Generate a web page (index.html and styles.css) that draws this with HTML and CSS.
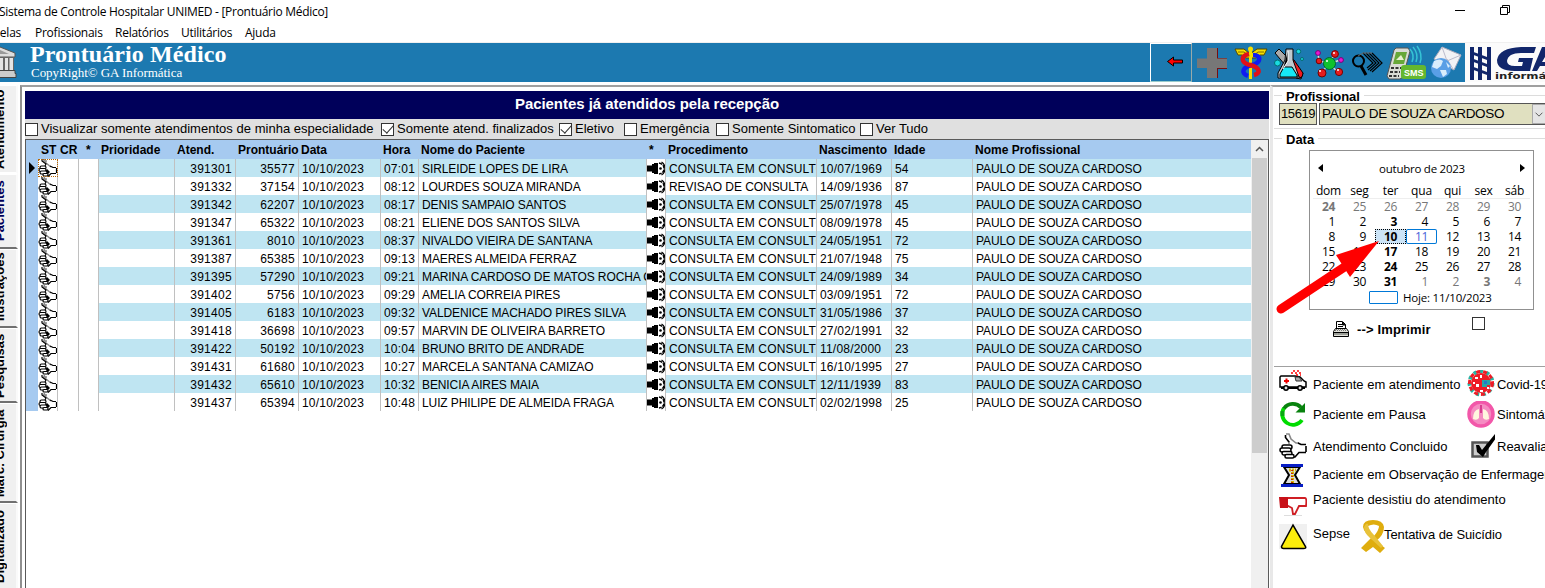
FILE: index.html
```html
<!DOCTYPE html>
<html lang="pt-BR">
<head>
<meta charset="utf-8">
<title>Prontuário Médico</title>
<link rel="stylesheet" href="styles.css">
</head>
<body>
<svg class="defs" width="0" height="0" aria-hidden="true">
  <symbol id="hand" viewBox="0 0 28 26" preserveAspectRatio="none">
    <path fill="#fff" d="M7 1h3l3 6 6 3 8 2v7l-8 1-5 4H6l-4-6v-5l9-2-4-7z"/>
    <path fill="none" stroke="#888" stroke-width="1.600" d="M7 1h3l2 5 5 4h3M10 8v3"/>
    <path fill="none" stroke="#000" stroke-width="1.600" d="M6.500 2v2.500L10 9M19 10l3 1.500h5M27 13v6M27 19.500h-7l-4 4.500h-3"/>
    <g fill="#fff" stroke="#000" stroke-width="1.500"><rect x="3" y="12" width="10" height="4" rx="2"/><rect x="1" y="15" width="11" height="4" rx="2"/><rect x="3" y="18.500" width="10" height="3.500" rx="1.700"/><rect x="6" y="21.500" width="9" height="3.500" rx="1.500"/></g>
  </symbol>
  <symbol id="hand-cell" viewBox="0 0 19 18">
    <path fill="none" stroke="#888" stroke-width="1.400" d="M6 0l2 4 5 4M5 2h4"/>
    <path fill="none" stroke="#000" stroke-width="1.200" d="M4 0v2l4 3-1 2M12 7l3 1.500h3M18.500 9v5M18 14.500h-5l-3 3"/>
    <path fill="#000" d="M9 10l3 3-3 3-3-2z"/>
    <g fill="#fff" stroke="#000" stroke-width="1.200"><rect x="2" y="7" width="6" height="3" rx="1.500"/><rect x="1" y="9.500" width="7" height="3" rx="1.500"/><rect x="2" y="12" width="7" height="3" rx="1.500"/><rect x="5" y="14.500" width="5" height="2.500" rx="1"/></g>
  </symbol>
  <symbol id="sound" viewBox="0 0 19 18">
    <path d="M0 6.500h5V5h2V4h4v11H7v-1H5v-1.500H0z"/>
    <circle cx="13.500" cy="9.500" r="1.300"/>
    <path fill="none" stroke="#000" stroke-width="1.500" d="M12 4q5 1 5 5.500T12 15" stroke-dasharray="3.500 1"/>
    <path fill="none" stroke="#000" stroke-width="1.300" d="M14.500 3q3.500 2 3.500 6.500T14.500 16"/>
  </symbol>
</svg>

<header class="titlebar">
  <span class="title">Sistema de Controle Hospitalar UNIMED - [Prontuário Médico]</span>
  <svg class="winctl" width="60" height="20" viewBox="0 0 60 20" fill="none" stroke="#000"><path d="M0 10.500h10M45.500 7.500h7v7h-7zM47.500 7.500v-2h7v7h-2"/></svg>
</header>
<nav class="menubar"><span class="m1">Tabelas</span><span class="m2">Profissionais</span><span class="m3">Relatórios</span><span class="m4">Utilitários</span><span class="m5">Ajuda</span></nav>

<div class="banner">
  <svg class="temple" width="17" height="39" viewBox="0 43 17 39"><path fill="#ddd" stroke="#555" d="M-16 54L0 47l15 6v4h-16z"/><path fill="#999" d="M0 50l9 4H0z"/><path fill="#666" d="M0 57h14v14H0z"/><path fill="#e4e4e4" d="M0 58h3v12H0zM5 58h3v12H5zM9.500 58h3.500v12H9.500z"/><path fill="#ccc" stroke="#444" d="M-2 70.500h17v3h1v4H-2z"/></svg>
  <div class="brand"><h1>Prontuário Médico</h1><p>CopyRight© GA Informática</p></div>
  <div class="tools">
    <div class="back"><svg width="40" height="37" viewBox="1151 44 40 37"><path fill="#f00" stroke="#000" d="M1167.500 61.500l6-4.500v3h9v3h-9v3z"/></svg></div>
    <svg width="40" height="39" viewBox="1192 43 40 39"><path fill="#7a0d10" d="M1208 48h10v10h9v11h-9v9h-10z"/><path fill="#777" d="M1207 48h10v10.500h10V68h-10v10h-10V68h-10v-9.500h10z"/></svg>
    <svg width="40" height="39" viewBox="1232 43 40 39"><g fill="none"><path stroke="#554900" stroke-width="1" d="M1235 49h9l6 5 7-5h10l-3 6h-4l-4 3h-10l-4-3h-4z" fill="#f5df00"/><path stroke="#806c00" d="M1238 52h6l5 4M1264 52h-6l-5 4"/><path stroke="#f5df00" stroke-width="3" d="M1250.500 49v30"/><path stroke="#101cf0" stroke-width="4.500" d="M1253 55c9 0 8 8-1 10s-12 8-4 11"/><path stroke="#e01018" stroke-width="4.500" d="M1249 54c-9 2-8 9 1 11s12 8 4 10"/></g><circle cx="1250.500" cy="49" r="2.500" fill="#f5df00"/></svg>
    <svg width="40" height="39" viewBox="1272 43 40 39"><g stroke="#000"><path fill="#aaa" d="M1275 53l4-4 24 24-2 6-5-1z"/><path fill="#ef1a1f" d="M1288 59l6 1 9 13q0 4-3 5z"/><path fill="#bfc9cf" d="M1286 49h7v11l5 14v4h-20v-5l7-13z"/><path fill="#16e8f5" d="M1284 67h8l5 8v2h-17v-3z"/></g><path stroke="#fff" d="M1288 51v10l-5 8"/><g fill="#19dbe0" stroke="#046b70"><circle cx="1277.500" cy="63" r="3"/><circle cx="1298.500" cy="51.500" r="2.200"/><circle cx="1302" cy="59" r="1.500"/></g></svg>
    <svg width="39" height="39" viewBox="1312 43 39 39"><path fill="none" stroke="#ddd" stroke-width="1.500" d="M1318 53l1 8 10 2 6-9M1322 72l7-8 9 8M1340 60l-11 4"/><circle cx="1329.500" cy="63.500" r="6" fill="#0fc22e" stroke="#063"/><g fill="#e51c1e" stroke="#700"><circle cx="1319" cy="61" r="2.800"/><circle cx="1335" cy="54" r="3.400"/><circle cx="1322" cy="73" r="4"/><circle cx="1339" cy="72" r="3.600"/></g><g fill="#e817d2" stroke="#707"><circle cx="1318" cy="53" r="2.400"/><circle cx="1341" cy="60" r="2.400"/></g><g fill="#fff"><circle cx="1327" cy="61" r="1"/><circle cx="1320" cy="71" r="1"/><circle cx="1338" cy="70" r="1"/><circle cx="1334" cy="53" r="1"/></g></svg>
    <svg width="35" height="39" viewBox="1351 43 35 39" fill="none" stroke="#000"><circle cx="1358.500" cy="61" r="5.500" stroke-width="2"/><path stroke-width="3" d="M1361 66l5 9"/><path stroke-width="1.200" d="M1372 53l10 10-10 9M1369 53l10 10-9 8M1366 53l10 10-8 7M1363 53l10 10-6 5"/><path stroke="#666" d="M1372 53h-9l-5 3"/></svg>
    <svg width="42" height="39" viewBox="1386 43 42 39"><path fill="#d9dcd5" stroke="#555" d="M1396 48h12l2 3-7 26-3 2h-11l-2-3 7-26z"/><path fill="#67a838" d="M1396 52h11l-3 12h-11z"/><path fill="#e8f1d0" d="M1396 60l5-5 3 5z"/><path stroke="#333" stroke-width="2" stroke-dasharray="3 1.500" d="M1391 68h11M1390 72h10M1389 76h10"/><g fill="none" stroke="#35c3d5" stroke-width="1.500"><path d="M1410 49q5 6 2 13M1413 47q6 7 3 15M1417 46q6 8 3 17"/></g><rect x="1401" y="65" width="25" height="14" rx="3" fill="#64b72f"/><text x="1404" y="76" class="sms">SMS</text></svg>
    <svg width="37" height="39" viewBox="1428 43 37 39"><path fill="#f2f2f5" stroke="#aab" d="M1434 59l8-12 19 8-7 15z"/><path fill="none" stroke="#bbc" d="M1442 47l5 14 14-6M1447 59l6 10"/><circle cx="1441" cy="68" r="10" fill="#5a9fe6"/><path fill="#d9edfc" d="M1434 61q6-3 9 0l-2 5-4 3-5-2zM1440 70l6 0 1 4-4 3zM1446 62l4 4-2 2z"/></svg>
    <svg width="80" height="39" viewBox="1465 43 80 39"><path fill="#fbfbfb" d="M1465 43h80v39h-80z"/><g fill="#11266b"><path d="M1470 47h4v33h-4zM1478 47h4v33h-4zM1487 47h4v33h-4zM1471 51l16 6v3l-16-6zM1471 58l16 6v3l-16-6zM1471 66l16 6v3l-16-6z"/><path d="M1536 47h-15q-22 1-24 13 0 11 18 11h15l3-13h-14l-1 4h5l-1 4h-7q-8 0-8-5 1-8 14-8h13z"/><path d="M1545 47h-3l-10 24h5l3-5h5v-4h-3l3-5z"/></g><text x="1495" y="79" class="info" textLength="76" lengthAdjust="spacingAndGlyphs">informática</text></svg>
  </div>
</div>

<main class="workspace">
  <aside class="tabs">
    <div class="tab t1"><span>Atendimento</span></div><div class="tab t2"><span>Pacientes</span></div><div class="tab t3"><span>Ilustrações</span></div><div class="tab t4"><span>Pesquisas</span></div><div class="tab t5"><span>Marc. Cirurgia</span></div><div class="tab t6"><span>Digitalizado</span></div>
  </aside>
  <section class="list">
    <h2>Pacientes já atendidos pela recepção</h2>
    <div class="filters">
      <label class="f1"><i class="box"></i><span>Visualizar somente atendimentos de minha especialidade</span></label>
      <label class="f2"><i class="box on"></i><span>Somente atend. finalizados</span></label>
      <label class="f3"><i class="box on"></i><span>Eletivo</span></label>
      <label class="f4"><i class="box"></i><span>Emergência</span></label>
      <label class="f5"><i class="box"></i><span>Somente Sintomatico</span></label>
      <label class="f6"><i class="box"></i><span>Ver Tudo</span></label>
    </div>
    <div class="gridbox">
      <div class="grid">
        <div class="row head"><b></b><b>ST</b><b>CR</b><b>*</b><b>Prioridade</b><b>Atend.</b><b>Prontuário</b><b>Data</b><b>Hora</b><b>Nome do Paciente</b><b>*</b><b>Procedimento</b><b>Nascimento</b><b>Idade</b><b>Nome Profissional</b></div>
        <div id="rows"></div>
      </div>
      <div class="scroll"><svg width="17" height="18" viewBox="0 0 17 18"><path fill="none" stroke="#555" stroke-width="1.500" d="M5 11l3.500-3.500L12 11"/></svg><div class="thumb"></div></div>
    </div>
  </section>
  <section class="side">
    <div class="group prof"><h3>Profissional</h3>
      <div class="fields"><span class="code">15619</span><span class="combo"><span>PAULO DE SOUZA CARDOSO</span><svg width="14" height="20" viewBox="0 0 14 20"><path fill="none" stroke="#444" d="M3 8.500l4 4 4-4"/></svg></span></div>
    </div>
    <div class="group data"><h3>Data</h3>
      <div class="calendar">
        <div class="month"><svg width="6" height="8"><path d="M5 0v8L0 4z"/></svg><span>outubro de 2023</span><svg width="6" height="8"><path d="M0 0v8l5-4z"/></svg></div>
        <div class="dow"><span>dom</span><span>seg</span><span>ter</span><span>qua</span><span>qui</span><span>sex</span><span>sáb</span></div>
        <div class="days" id="days"></div>
        <div class="today"><i></i><span>Hoje: 11/10/2023</span></div>
      </div>
    </div>
    <div class="print">
      <svg width="18" height="17" viewBox="0 0 18 17"><path fill="#fff" stroke="#000" d="M4.500 7V.500h6l3 3V8"/><path stroke="#000" d="M6 3.500h4M6 5.500h5M10.500 1v3h3"/><path fill="#e0e0d8" stroke="#000" d="M3.500 7.500h11l2 3v5H1.500v-5z"/><path stroke="#000" d="M2 11.500h14"/><path fill="#9a9d96" d="M2 12h14v2H2z"/><path stroke="#777" stroke-dasharray="1 1" d="M4 8.500h10M3 9.500h12"/></svg>
      <b>--&gt; Imprimir</b><i class="box"></i>
    </div>
    <div class="legend">
      <div class="item i1"><svg width="28" height="28" viewBox="0 0 28 28"><path fill="#fff" stroke="#000" stroke-width="1.500" d="M2 6h14l5 1 4 4 2 1v5H1V7z"/><path fill="#aaa" stroke="#333" d="M16 7h4l3 4h-6z"/><path stroke="#e00" stroke-width="2" d="M7.500 8.500v5M5 11h5"/><path stroke="#f00" stroke-width="1.600" stroke-dasharray="2 2" d="M12 3h12M14 1h8M17 5h5"/><path stroke="#000" stroke-width="2" d="M2 18h24"/><g fill="#ddd" stroke="#000" stroke-width="1.500"><circle cx="7" cy="18" r="2.200"/><circle cx="21" cy="18" r="2.200"/></g></svg><span>Paciente em atendimento</span>
        <svg class="second" width="28" height="28" viewBox="0 1 28 28"><circle cx="14" cy="14" r="11.500" fill="none" stroke="#27b5a5" stroke-width="4" stroke-dasharray="3 3.600"/><circle cx="14" cy="14" r="10" fill="#ee1c25"/><circle cx="14" cy="14" r="11.500" fill="none" stroke="#ee1c25" stroke-width="3" stroke-dasharray="4 3"/><path fill="#fff" d="M8 8h3v2H8zM13 6h2v3h-2zM9 15h3v3H9zM13 21h3v2h-3zM6 13h2v2H6zM20 18h2v2h-2z"/><path fill="#27a6a5" d="M15 11h8v5h-3v2h-5z"/><path fill="#2478c8" d="M17 12h3v3h-3z"/></svg><span>Covid-19</span></div>
      <div class="item i2"><svg width="28" height="28" viewBox="0 0 28 28" fill="none" stroke-width="3.800"><path stroke="#00dc00" d="M5 7a10.700 10.700 0 0 0 18 12"/><path stroke="#08820e" d="M5 7.500a11 11 0 0 1 17-1"/><path stroke="#08a812" d="M3.500 10v5"/><path fill="#08820e" d="M26 2v9.500H16.500z"/></svg><span>Paciente em Pausa</span>
        <svg class="second" width="28" height="28" viewBox="0 1 28 28"><circle cx="14" cy="14" r="12" fill="#f58cc2" stroke="#f257a9" stroke-width="3.500"/><path fill="#fff7de" d="M6 19q0-9 6-10v9q-2 3-6 1zM22 19q0-9-6-10v9q2 3 6 1z"/><path stroke="#d83c8e" stroke-width="2" d="M14 5v8"/></svg><span>Sintomático</span></div>
      <div class="item i3"><svg width="28" height="26"><use href="#hand"/></svg><span>Atendimento Concluido</span>
        <svg class="second" width="28" height="26" viewBox="0 0 28 26"><path fill="#ccc" stroke="#555" stroke-width="2.500" d="M5.500 9.500h15v14h-15z"/><path fill="#000" d="M9 12h3l3 5L28 1h4L19 19l-3 5-6-5z"/></svg><span>Reavaliação</span></div>
      <div class="item i4"><svg width="28" height="26" viewBox="0 -1 28 26"><path fill="#ddd" stroke="#000" stroke-width="2" d="M5 4h16l-5 8 5 9H5l5-9z"/><path fill="#081ec5" d="M2 1h22v3H2zM2 21h22v3H2z"/><path stroke="#d6b400" stroke-width="3" stroke-dasharray="2 1" d="M10 7h7M13.500 9v12"/><path stroke="#b00" stroke-width="1.500" stroke-dasharray="1 2" d="M13 7v14"/></svg><span>Paciente em Observação de Enfermagem</span></div>
      <div class="item i5"><svg width="28" height="22" viewBox="0 0 28 22"><path fill="#fff" stroke="#cf1e24" stroke-width="1.800" d="M8 3h18q2 0 1 8h-7l-4 8h-2l-1-6-4-2H8z"/><path fill="#c81018" d="M0 2h9v11H1z"/><path stroke="#ddd" d="M5 20.500h18"/></svg><span>Paciente desistiu do atendimento</span></div>
      <div class="item i6"><svg width="28" height="28" viewBox="0 0 28 28"><path fill="#f0f0f0" d="M0 1h28v25H0z"/><path fill="#fbed0c" stroke="#000" stroke-width="1.500" d="M14 2L2.500 23.500q0 2 2 2h20q3 0 2-2z"/></svg><span>Sepse</span>
        <svg class="ribbon" width="26" height="34" viewBox="0 0 26 34"><path fill="#dfad0e" d="M2 8q0-7 10-7t11 7q0 8-8 14l9 7-5 5-7-6-7 5-5-4 11-11Q3 14 2 8zm5-1q0 5 6 10 5-6 5-10-5-3-11 0z" fill-rule="evenodd"/><path fill="#e8c23a" d="M3 8q2-5 4-3 0 5 6 11l9 11-2 2L9 19Q3 14 3 8z"/></svg><span>Tentativa de Suicídio</span></div>
    </div>
  </section>
  <svg class="pointer" width="112" height="82" viewBox="1273 235 112 82"><path stroke="#f00" stroke-width="9" stroke-linecap="round" d="M1281 309l68-45"/><path fill="#f00" d="M1379 241l-29 36-14-22z"/></svg>
</main>
<script src="app.js"></script>
</body>
</html>
```
FILE: app.js
```js
const C = 'CONSULTA EM CONSULTORIO';
const patients = [
  ['391301', '35577', '07:01', 'SIRLEIDE LOPES DE LIRA', C, '10/07/1969', '54'],
  ['391332', '37154', '08:12', 'LOURDES SOUZA MIRANDA', 'REVISAO DE CONSULTA', '14/09/1936', '87'],
  ['391342', '62207', '08:17', 'DENIS SAMPAIO SANTOS', C, '25/07/1978', '45'],
  ['391347', '65322', '08:21', 'ELIENE DOS SANTOS SILVA', C, '08/09/1978', '45'],
  ['391361', '8010', '08:37', 'NIVALDO VIEIRA DE SANTANA', C, '24/05/1951', '72'],
  ['391387', '65385', '09:13', 'MAERES ALMEIDA FERRAZ', C, '21/07/1948', '75'],
  ['391395', '57290', '09:21', 'MARINA CARDOSO DE MATOS ROCHA C', C, '24/09/1989', '34'],
  ['391402', '5756', '09:29', 'AMELIA CORREIA PIRES', C, '03/09/1951', '72'],
  ['391405', '6183', '09:32', 'VALDENICE MACHADO PIRES SILVA', C, '31/05/1986', '37'],
  ['391418', '36698', '09:57', 'MARVIN DE OLIVEIRA BARRETO', C, '27/02/1991', '32'],
  ['391422', '50192', '10:04', 'BRUNO BRITO DE ANDRADE', C, '11/08/2000', '23'],
  ['391431', '61680', '10:27', 'MARCELA SANTANA CAMIZAO', C, '16/10/1995', '27'],
  ['391432', '65610', '10:32', 'BENICIA AIRES MAIA', C, '12/11/1939', '83'],
  ['391437', '65394', '10:48', 'LUIZ PHILIPE DE ALMEIDA FRAGA', C, '02/02/1998', '25']
];
const cell = (cls, html) => `<div class="${cls}">${html}</div>`;
document.getElementById('rows').innerHTML = patients.map((p, i) =>
  `<div class="row${i === 0 ? ' current' : ''}">` +
  cell('ind', i === 0 ? '<svg width="7" height="12"><path d="M0 0l6 6-6 6z"/></svg>' : '') +
  cell('st', '<svg width="19" height="18"><use href="#hand-cell"/></svg>') +
  cell('blank', '') + cell('blank', '') + cell('', '') +
  cell('num', p[0]) + cell('num', p[1]) + cell('date', '10/10/2023') + cell('date', p[2]) +
  cell('txt', p[3]) + cell('st', '<svg width="19" height="18"><use href="#sound"/></svg>') +
  cell('txt proc' + (p[4] === C ? ' long' : ''), p[4]) + cell('date', p[5]) + cell('date', p[6]) +
  cell('txt last', 'PAULO DE SOUZA CARDOSO') + '</div>').join('');

const bold = new Set([0, 9, 16, 23, 30, 37, 40]);
let out = '';
for (let i = 0; i < 42; i++) {
  const n = i < 7 ? 24 + i : i < 38 ? i - 6 : i - 37;
  const cls = [];
  if (i < 7 || i > 37) cls.push('off');
  if (bold.has(i)) cls.push('bold');
  if (i === 16) cls.push('sel');
  if (i === 17) cls.push('now');
  out += `<span class="${cls.join(' ')}"><em>${n}</em></span>`;
}
document.getElementById('days').innerHTML = out;
```
FILE: styles.css
```css
* { box-sizing: border-box; }
body { margin: 0; width: 1545px; height: 588px; overflow: hidden; background: #fff; color: #000; font: 12px "Liberation Sans", Arial, sans-serif; display: flex; flex-direction: column; }
h1, h2, h3, p { margin: 0; }
svg { display: block; flex: none; }
.defs { position: absolute; }
.titlebar { height: 24px; flex: none; display: flex; justify-content: space-between; font: 12px/24px "Open Sans", sans-serif; white-space: nowrap; }
.title { letter-spacing: -.29px; margin-left: -1px; }
.winctl { margin-right: 30px; }
.menubar { height: 19px; flex: none; display: flex; font: 12px/18px "Open Sans", sans-serif; border-bottom: 1px solid #f0f0f0; white-space: nowrap; }
.menubar span { letter-spacing: -.25px; }
.m1 { width: 55px; margin-left: -20px; }
.m2 { width: 80px; }
.m3 { width: 66px; }
.m4 { width: 64px; }
.banner { height: 39px; flex: none; display: flex; background: #1c79b0; color: #fff; overflow: hidden; }
.brand { margin-left: 13px; font-family: "Liberation Serif", serif; white-space: nowrap; }
.brand h1 { font-size: 24px; line-height: 23px; letter-spacing: .1px; }
.brand p { font-size: 13px; line-height: 14px; margin-left: 1px; letter-spacing: -.04px; }
.tools { display: flex; margin-left: auto; }
.back { width: 42px; border: 1px solid #fff; border-right-color: #9aa; border-bottom-color: #9cc; }
.sms { font: bold 9px "Liberation Sans", sans-serif; fill: #fff; }
.info { font: bold 9px "DejaVu Sans", sans-serif; fill: #222; }
.workspace { position: relative; flex: 1; display: flex; min-height: 0; border-top: 2px solid #fff; }
.tabs { width: 20px; flex: none; display: flex; flex-direction: column; background: #fff; overflow: hidden; padding-top: 1px; }
.tab { width: 18px; flex: none; background: #f0f0f0; border-bottom: 2px solid #707070; border-top: 1px solid #fff; border-right: 2px solid #fafafa; overflow: hidden; }
.tab span { display: block; writing-mode: vertical-rl; transform: rotate(180deg); font: bold 13px/14px "Liberation Sans", sans-serif; margin-left: -7px; width: 14px; height: 100%; white-space: nowrap; }
.t1 { height: 89px; border-bottom-color: #fff; padding: 5px 0 3px; }
.t2 { height: 75px; padding-bottom: 6px; color: #00005a; }
.t3 { height: 79px; padding-bottom: 5px; }
.t4 { height: 75px; padding-bottom: 3px; }
.t5 { height: 100px; padding-bottom: 4px; }
.t6 { height: 88px; padding-bottom: 6px; }
.list { width: 1250px; flex: none; border-left: 2px solid #909090; border-top: 2px solid #a0a0a0; padding: 4px 1px 0 3px; margin-top: 1px; display: flex; flex-direction: column; }
.list h2 { height: 28px; flex: none; background: #00005a; color: #fff; font: bold 15px/26px "Liberation Sans", sans-serif; letter-spacing: -.05px; text-align: center; }
.filters { height: 20px; flex: none; display: flex; background: #e0e0e0; font-size: 13px; line-height: 20px; white-space: nowrap; }
.filters label { display: flex; align-items: center; flex: none; }
.filters span { margin-left: 3px; }
.box { width: 13px; height: 13px; flex: none; border: 1px solid #333; background: #fff; display: block; }
.box.on::after { content: ""; display: block; width: 9px; height: 5px; margin: 1px 0 0 1px; border: solid #333; border-width: 0 0 1px 1px; transform: rotate(-48deg); }
.f1 { width: 356px; letter-spacing: .02px; }
.f2 { width: 178px; }
.f3 { width: 65px; }
.f4 { width: 92px; }
.f5 { width: 144px; }
.gridbox { flex: 1; min-height: 0; display: flex; border: 1px solid #5a5a5a; border-bottom: 0; }
.grid { width: 1225px; flex: none; }
.row { display: grid; grid-template-columns: 12px 20px 21px 20px 76px 61px 63px 82px 38px 228px 19px 151px 75px 81px 278px; height: 18px; line-height: 20px; white-space: nowrap; }
.row > div { overflow: hidden; border-right: 1px solid #c0c0c0; padding-left: 3px; height: 18px; }
.row:nth-child(odd) > div { background: #bfe5f2; }
.head { height: 19px; background: #a6caf0; line-height: 20px; }
.head b { padding-left: 2px; }
.head b:nth-child(2) { padding-left: 3px; }
.head b:nth-child(4) { padding-left: 7px; }
#rows .row > .ind { background: #a6caf0; border: 0; padding: 3px 0 0 3px; }
#rows .row > .st { background: #fff; padding: 0; }
#rows .row > .blank { background: #fff; }
.current .st:nth-child(2) { outline: 1px dotted #b60; outline-offset: -1px; }
.row > .num { text-align: right; padding-right: 3px; letter-spacing: .3px; }
.row > .date { letter-spacing: .2px; }
.row > .txt { letter-spacing: -.1px; }
.row > .proc { letter-spacing: -.05px; }
.row > .long { letter-spacing: .15px; }
.row > .last { border: 0; }
.scroll { flex: 1; background: #f0f0f0; }
.thumb { height: 295px; background: #cdcdcd; margin: 0 1px; }
.side { flex: 1; min-width: 0; border-left: 3px solid #e8e8e8; border-top: 2px solid #a0a0a0; margin-top: 1px; padding-left: 1px; overflow: hidden; display: flex; flex-direction: column; }
.group { width: 300px; border: 1px solid #dcdcdc; border-left: 0; flex: none; }
.group h3 { font: bold 13px/13px "Liberation Sans", sans-serif; margin-left: 8px; padding: 0 4px; background: #fff; width: max-content; transform: translateY(-6px); height: 13px; }
.prof { margin-top: 8px; height: 34px; }
.prof h3 { letter-spacing: -.05px; }
.fields { display: flex; gap: 2px; margin: -6px 0 0 5px; }
.code, .combo { height: 22px; border: 1px solid #555; background: #e0e0c0; }
.code { width: 38px; font-size: 13px; line-height: 19px; padding-left: 1px; letter-spacing: -.4px; }
.combo { width: 240px; display: flex; font-size: 13.500px; line-height: 20px; white-space: nowrap; }
.combo span { width: 212px; padding-left: 2px; letter-spacing: -.3px; }
.combo svg { background: #e5e5e5; border: 1px solid #aaa; }
.data { margin-top: 9px; height: 174px; border-bottom: 0; }
.calendar { width: 225px; height: 160px; margin: -2px 0 0 35px; border: 1px solid #909090; font: 12px/15px "Open Sans", sans-serif; padding: 10px 3px 0; }
.month { display: flex; justify-content: space-between; align-items: center; padding: 0 4px 0 5px; font-size: 11.500px; letter-spacing: -.25px; }
.month svg { margin-top: -2px; }
.dow, .days { display: grid; grid-template-columns: repeat(7, 31px); text-align: center; }
.dow { margin-top: 7px; height: 16px; border-bottom: 1px solid #eee; letter-spacing: -.2px; }
.days { grid-auto-rows: 15px; }
.days em { font-style: normal; display: block; width: 22px; text-align: right; letter-spacing: -.4px; }
.off { color: #777; }
.bold { font-weight: bold; }
.sel { background: #cce4f7; outline: 1px dotted #000; outline-offset: -1px; }
.now { color: #4a62d8; box-shadow: inset 0 0 0 1px #0078d7; border-radius: 2px; }
.today { display: flex; align-items: center; gap: 5px; margin: 1px 0 0 56px; white-space: nowrap; font-size: 11.500px; letter-spacing: -.2px; }
.today i { width: 29px; height: 13px; border: 1px solid #0078d7; border-radius: 1px; }
.print { display: flex; height: 54px; flex: none; font-size: 13px; padding: 9px 0 0 58px; }
.print b { width: 115px; margin-left: 7px; line-height: 18px; letter-spacing: .15px; }
.print .box { margin-top: -4px; }
.legend { border-top: 1px solid #a0a0a0; flex: none; font-size: 13px; padding: 2px 0 0 5px; width: 330px; }
.item { display: flex; align-items: center; white-space: nowrap; }
.item span { margin-left: 6px; }
.item > span:nth-child(2) { width: 148px; }
.item .second { margin-left: 6px; }
.item .second + span { margin-left: 2px; }
.i1 .second + span { letter-spacing: -.15px; }
.i1 { height: 30px; }
.i2 { height: 31px; }
.i3 { height: 32px; }
.i4 { height: 25px; }
.i5 { height: 31px; align-items: flex-start; padding-top: 8px; }
.i5 > span { margin-top: -3px; letter-spacing: .04px; }
.i6 { height: 38px; }
.item.i6 > span:nth-child(2) { width: 44px; margin-top: -8px; }
.item .ribbon { margin-left: 4px; margin-top: -2px; }
.item .ribbon + span { margin-left: -3px; margin-top: -6px; letter-spacing: -.1px; }
.pointer { position: absolute; left: 1273px; top: 151px; }
```
